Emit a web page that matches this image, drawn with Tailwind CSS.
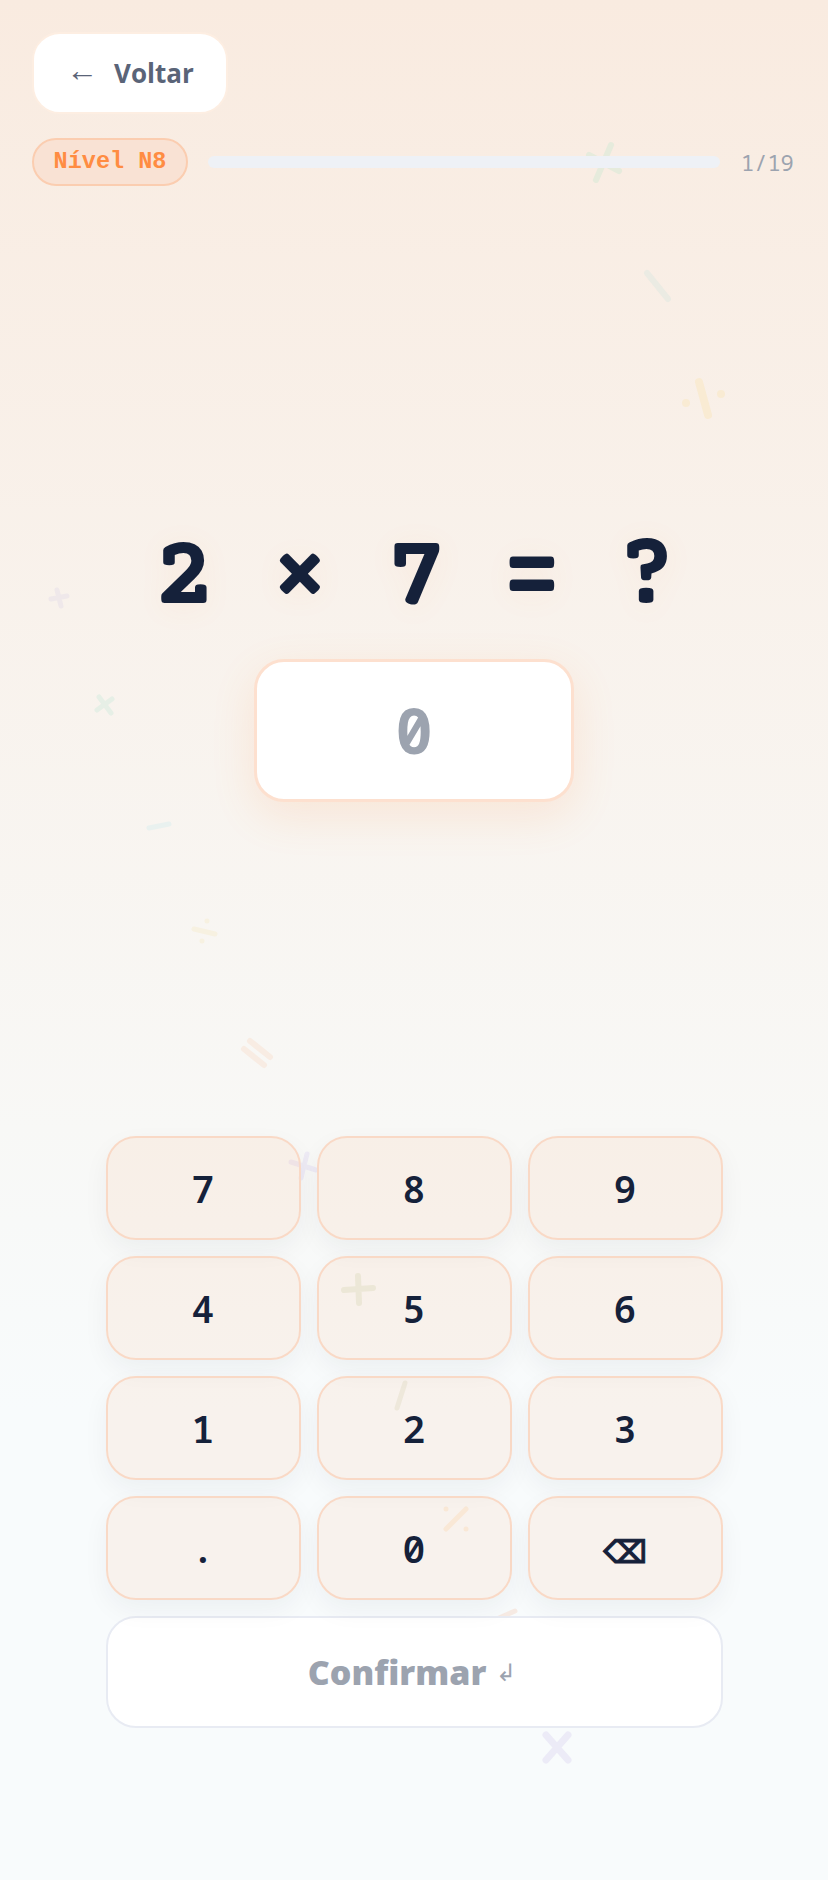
<!DOCTYPE html>
<html lang="pt-BR">
<head>
    <meta charset="UTF-8">
    <meta name="viewport" content="width=device-width, initial-scale=1.0">
    <title>Treino - Nível N8</title>
    <script src="https://cdn.jsdelivr.net/npm/@tailwindcss/browser@4"></script>
</head>

<body class="bg-[#f8fbfc]">
    <main class="relative w-[828px] h-[1880px] overflow-hidden bg-[linear-gradient(180deg,#f9ebe0_0%,#f8f8f6_60%,#f8fbfc_75%,#f8fbfc_100%)] px-8 pt-8 font-['Open_Sans',sans-serif]">

        <!-- Simbolos decorativos do fundo -->
        <svg class="absolute top-0 left-0" width="828" height="1880" fill="none" stroke-linecap="round">
            <path d="M611 145L596 180M589 155L619 171" stroke="#e6ebdc" stroke-width="6"/>
            <path d="M647 273L668 299" stroke="#ebebe3" stroke-width="6"/>
            <path d="M699 382L708 415M686 403h.01M721 394h.01" stroke="#f9ebd3" stroke-width="8"/>
            <path d="M57 590L61 606M51 599L67 596" stroke="#efe8ea" stroke-width="5"/>
            <path d="M99 697L111 713M112 699L97 710" stroke="#e6efe6" stroke-width="5"/>
            <path d="M149 828L169 824" stroke="#e9f1ef" stroke-width="5"/>
            <path d="M194 929L215 934M207 921h.01M202 941h.01" stroke="#f7f1e1" stroke-width="5"/>
            <path d="M250 1041L270 1057M244 1049L264 1065" stroke="#f8ece3" stroke-width="6"/>
            <path d="M307 1154L301 1178M291 1162L316 1170" stroke="#eeebf5" stroke-width="5"/>
            <path d="M358 1276L359 1303M344 1290L373 1288" stroke="#ebefe4" stroke-width="6"/>
            <path d="M405 1383L397 1408" stroke="#edf0e9" stroke-width="5"/>
            <path d="M466 1509L446 1529M446 1509h.01M466 1529h.01" stroke="#f9f0e3" stroke-width="5"/>
            <path d="M515 1611L490 1622" stroke="#f7ebe4" stroke-width="5"/>
            <path d="M546 1735L568 1760M568 1735L546 1760" stroke="#ecebf7" stroke-width="7"/>
        </svg>

        <div class="relative flex flex-col">
            <button class="flex h-[82px] w-[196px] items-center gap-[16px] rounded-[28px] border-2 border-[#fdeee2] bg-white pl-[32px] text-[26px] font-bold text-[#5a6478]">
                <span class="pb-2 text-[32px] font-normal leading-none">←</span>
                <span>Voltar</span>
            </button>

            <div class="mt-6 flex items-center">
                <span class="flex h-[48px] w-[156px] items-center justify-center rounded-full border-2 border-[#fbcdb0] bg-[#f9e2d4] font-['Liberation_Mono',monospace] text-[23.5px] font-bold text-[#ff8c42]">Nível N8</span>
                <div class="ml-5 h-3 w-[512px] rounded-full bg-[#eef1f6]"></div>
                <span class="ml-[21px] font-['Noto_Sans_Mono',monospace] text-[22px] text-[#9ca3af]">1/19</span>
            </div>

            <div class="mt-[354px] flex h-[80px] items-center justify-center whitespace-pre font-['Courier_Prime',monospace] text-[103px] font-bold leading-none tracking-[-3.8px] text-[#15213a] [text-shadow:0_4px_30px_rgba(255,140,66,0.08)]">2 × 7 = ?</div>

            <div class="mx-auto mt-[39px] flex h-[143px] w-[320px] items-center justify-center rounded-[30px] border-[3px] border-[#fde0cf] bg-white font-['Noto_Sans_Mono',monospace] text-[62px] font-bold text-[#9ca3af] shadow-[0_14px_44px_rgba(255,140,66,0.14)]">0</div>

            <div class="mx-auto mt-[334px] w-[617px]">
                <div class="grid grid-cols-3 gap-4 font-['Noto_Sans_Mono',monospace] text-[38px] font-semibold text-[#15213a]">
                    <button class="h-[104px] rounded-[30px] border-2 border-[#f9d9c6] bg-[#ff8c42]/8 shadow-[0_10px_26px_rgba(15,33,58,0.05)]">7</button>
                    <button class="h-[104px] rounded-[30px] border-2 border-[#f9d9c6] bg-[#ff8c42]/8 shadow-[0_10px_26px_rgba(15,33,58,0.05)]">8</button>
                    <button class="h-[104px] rounded-[30px] border-2 border-[#f9d9c6] bg-[#ff8c42]/8 shadow-[0_10px_26px_rgba(15,33,58,0.05)]">9</button>
                    <button class="h-[104px] rounded-[30px] border-2 border-[#f9d9c6] bg-[#ff8c42]/8 shadow-[0_10px_26px_rgba(15,33,58,0.05)]">4</button>
                    <button class="h-[104px] rounded-[30px] border-2 border-[#f9d9c6] bg-[#ff8c42]/8 shadow-[0_10px_26px_rgba(15,33,58,0.05)]">5</button>
                    <button class="h-[104px] rounded-[30px] border-2 border-[#f9d9c6] bg-[#ff8c42]/8 shadow-[0_10px_26px_rgba(15,33,58,0.05)]">6</button>
                    <button class="h-[104px] rounded-[30px] border-2 border-[#f9d9c6] bg-[#ff8c42]/8 shadow-[0_10px_26px_rgba(15,33,58,0.05)]">1</button>
                    <button class="h-[104px] rounded-[30px] border-2 border-[#f9d9c6] bg-[#ff8c42]/8 shadow-[0_10px_26px_rgba(15,33,58,0.05)]">2</button>
                    <button class="h-[104px] rounded-[30px] border-2 border-[#f9d9c6] bg-[#ff8c42]/8 shadow-[0_10px_26px_rgba(15,33,58,0.05)]">3</button>
                    <button class="h-[104px] rounded-[30px] border-2 border-[#f9d9c6] bg-[#ff8c42]/8 shadow-[0_10px_26px_rgba(15,33,58,0.05)]">.</button>
                    <button class="h-[104px] rounded-[30px] border-2 border-[#f9d9c6] bg-[#ff8c42]/8 shadow-[0_10px_26px_rgba(15,33,58,0.05)]">0</button>
                    <button class="h-[104px] rounded-[30px] border-2 border-[#f9d9c6] bg-[#ff8c42]/8 pt-2 font-['DejaVu_Sans',sans-serif] text-[31px] font-bold shadow-[0_10px_26px_rgba(15,33,58,0.05)] [-webkit-text-stroke:1px_#15213a]">⌫</button>
                </div>
                <button class="mt-4 flex h-[112px] w-full items-center justify-center gap-[10px] rounded-[30px] border-2 border-[#e8ebf3] bg-white pr-1 text-[34px] font-extrabold text-[#9ca3af]">
                    <span>Confirmar</span>
                    <span class="text-[24px] font-normal">↲</span>
                </button>
            </div>
        </div>
    </main>
</body>
</html>
